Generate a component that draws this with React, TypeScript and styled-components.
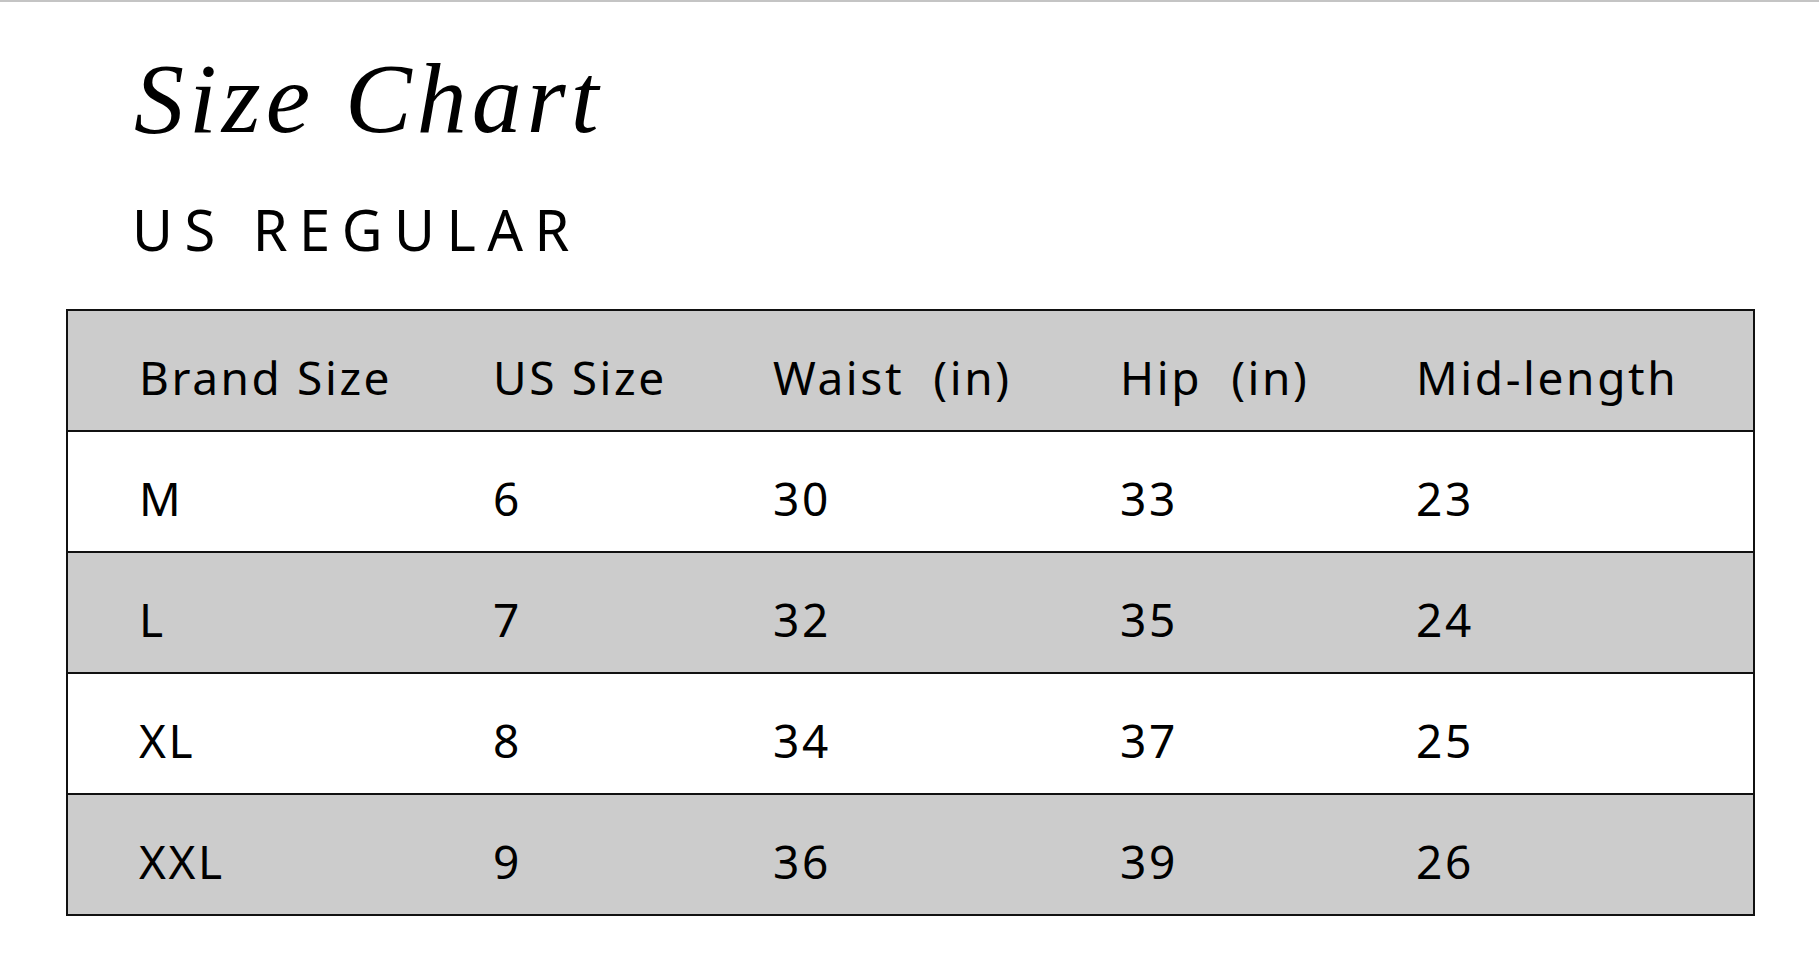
import React from "react";
import styled, { createGlobalStyle } from "styled-components";

const Global = createGlobalStyle`
  html, body { margin: 0; padding: 0; background: #ffffff; }
  body { font-family: "Noto Sans", "Open Sans", sans-serif; color: #000; }
`;

const Page = styled.div`
  border-top: 2px solid #c4c4c4;
  padding: 0 64px 40px 66px;
  box-sizing: border-box;
  width: 1819px;
`;

const Title = styled.h1`
  margin: 47px 0 0 0;
  padding-left: 68px;
  font-family: "Liberation Serif", "Times New Roman", serif;
  font-style: italic;
  font-weight: 400;
  font-size: 100px;
  line-height: 1;
  letter-spacing: 5px;
`;

const Subtitle = styled.h2`
  margin: 52px 0 0 0;
  padding-left: 66px;
  font-family: "Noto Sans", "Open Sans", sans-serif;
  font-weight: 400;
  font-size: 56px;
  line-height: 1;
  letter-spacing: 11.5px;
`;

const Table = styled.div`
  margin-top: 52px;
  border: 2px solid #111;
  display: flex;
  flex-direction: column;
`;

const Row = styled.div<{ $shade: boolean; $first: boolean }>`
  display: grid;
  grid-template-columns: 354px 280px 347px 296px 1fr;
  height: 119px;
  background: ${(p) => (p.$shade ? "#cccccc" : "#ffffff")};
  border-top: ${(p) => (p.$first ? "none" : "2px solid #111")};
`;

const Cell = styled.div`
  display: flex;
  align-items: center;
  padding: 13px 0 0 71px;
  box-sizing: border-box;
  font-family: "Noto Sans", "Open Sans", sans-serif;
  font-size: 46px;
  line-height: 1;
  letter-spacing: 2.6px;
  white-space: pre;
  color: #000;
`;

const header = ["Brand Size", "US Size", "Waist  (in)", "Hip  (in)", "Mid-length"];
const rows = [
  ["M", "6", "30", "33", "23"],
  ["L", "7", "32", "35", "24"],
  ["XL", "8", "34", "37", "25"],
  ["XXL", "9", "36", "39", "26"],
];

export default function App() {
  const all = [header, ...rows];
  return (
    <>
      <Global />
      <Page>
        <Title>Size Chart</Title>
        <Subtitle>US REGULAR</Subtitle>
        <Table>
          {all.map((r, i) => (
            <Row key={i} $shade={i % 2 === 0} $first={i === 0}>
              {r.map((c, j) => (
                <Cell key={j}>{c}</Cell>
              ))}
            </Row>
          ))}
        </Table>
      </Page>
    </>
  );
}
